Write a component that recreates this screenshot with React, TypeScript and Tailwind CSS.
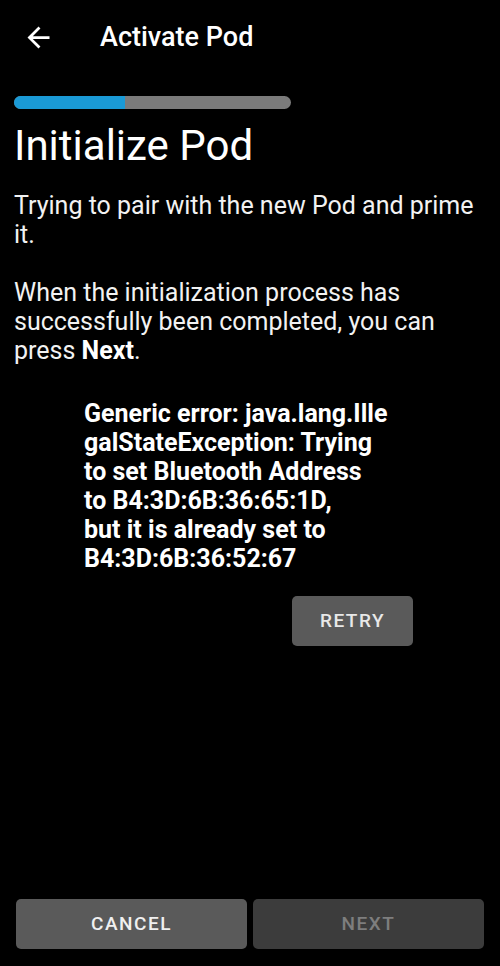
import React from 'react';

const errorLines = [
  'Generic error: java.lang.Ille',
  'galStateException: Trying',
  'to set Bluetooth Address',
  'to B4:3D:6B:36:65:1D,',
  'but it is already set to',
  'B4:3D:6B:36:52:67',
];

function BackArrow() {
  return (
    <svg width="33" height="33" viewBox="0 0 24 24" fill="#ffffff">
      <path d="M20 11H7.83l5.59-5.59L12 4l-8 8 8 8 1.41-1.41L7.83 13H20v-2z" />
    </svg>
  );
}

export default function App() {
  return (
    <div
      className="flex flex-col h-[966px] w-[500px] bg-black text-white overflow-hidden"
      style={{ fontFamily: 'Roboto, "Noto Sans", sans-serif' }}
    >
      {/* toolbar */}
      <div className="flex items-center h-[74px] pl-[22px]">
        <BackArrow />
        <span className="ml-[45px] text-[27px] font-medium leading-none">Activate Pod</span>
      </div>

      <div className="px-[14px]">
        <div className="mt-[22px] h-[13px] w-[277px] rounded-full bg-[#7b7b7b] overflow-hidden">
          <div className="h-full w-[111px] bg-[#1a9ad6]" />
        </div>

        <h1 className="mt-[12px] text-[42px] leading-[50px] font-normal">Initialize Pod</h1>

        <div className="mt-[20px] text-[25px] leading-[29px] text-[#f2f2f2]">
          <p>Trying to pair with the new Pod and prime it.</p>
          <p className="mt-[29px]">
            When the initialization process has successfully been completed, you can press{' '}
            <span className="font-bold text-white">Next</span>.
          </p>
        </div>

        <div className="mt-[34px] pl-[70px] text-[25px] leading-[29px] font-bold whitespace-nowrap">
          {errorLines.map((l, i) => (
            <div key={i}>{l}</div>
          ))}
        </div>

        <div className="mt-[23px] pl-[278px]">
          <button className="w-[121px] h-[50px] rounded-[5px] bg-[#5a5a5a] text-[19px] font-medium tracking-[1.5px] text-[#e8e8e8]">
            RETRY
          </button>
        </div>
      </div>

      <div className="flex-1" />

      <div className="flex gap-[6px] px-[16px] pb-[17px]">
        <button className="flex-1 h-[50px] rounded-[5px] bg-[#5a5a5a] text-[19px] font-medium tracking-[1.5px] text-[#f0f0f0]">
          CANCEL
        </button>
        <button className="flex-1 h-[50px] rounded-[5px] bg-[#3c3c3c] text-[19px] font-medium tracking-[1.5px] text-[#7e7e7e]">
          NEXT
        </button>
      </div>
    </div>
  );
}
